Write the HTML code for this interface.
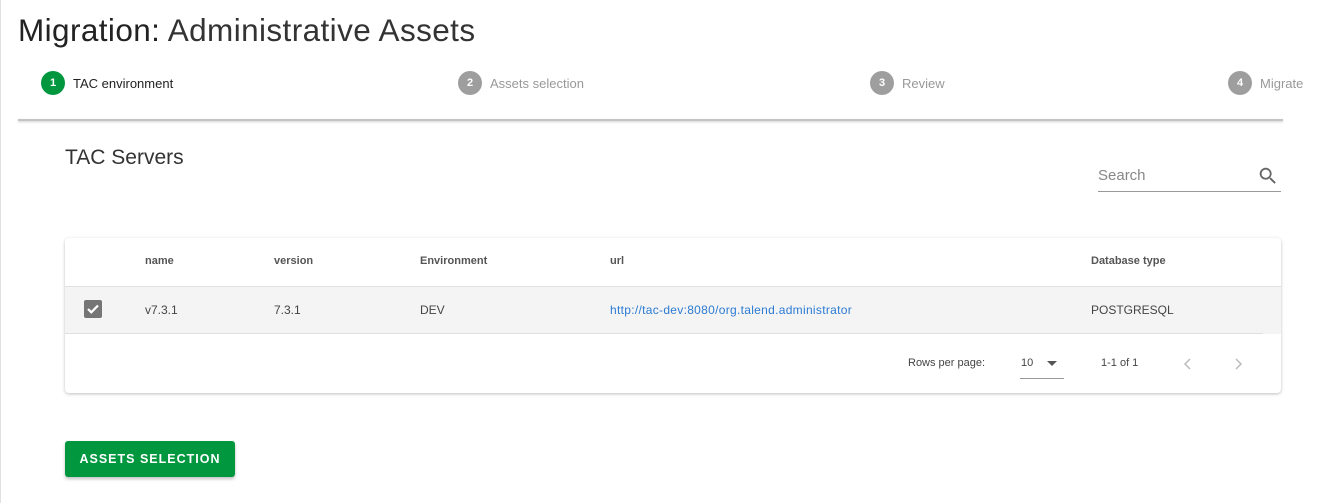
<!DOCTYPE html>
<html><head><style>
*{box-sizing:border-box;margin:0;padding:0}
body{width:1343px;height:503px;background:#fff;font-family:"Liberation Sans",sans-serif;position:relative;overflow:hidden;color:#222}
.abs{position:absolute}
h1{position:absolute;left:18px;top:12px;font-size:31.5px;font-weight:normal;color:#222;letter-spacing:0.4px}
h1 span{color:#333}
.step{position:absolute;top:71px;display:flex;align-items:center;font-size:13px;color:#999}
.step .c{width:24px;height:24px;border-radius:50%;background:#9e9e9e;color:#fff;font-size:11px;font-weight:bold;display:flex;align-items:center;justify-content:center;margin-right:8px}
.step.act{color:#222}.step.act .c{background:#00973e}
.hr{left:18px;top:119px;width:1265px;height:2px;background:#c4c4c4;box-shadow:0 1px 2px rgba(0,0,0,.2)}
.card{left:65px;top:238px;width:1216px;height:155px;background:#fff;border-radius:4px;box-shadow:0 1px 3px rgba(0,0,0,.25)}
.th{position:absolute;top:255px;font-size:11px;font-weight:bold;color:#555}
.td{position:absolute;top:303px;font-size:12px;color:#444}
</style></head><body>
<div class="abs" style="left:0;top:0;width:1px;height:503px;background:#e0e0e0"></div>
<h1>Migration: <span>Administrative Assets</span></h1>
<div class="step act" style="left:41px"><span class="c">1</span>TAC environment</div>
<div class="step" style="left:458px"><span class="c">2</span>Assets selection</div>
<div class="step" style="left:870px"><span class="c">3</span>Review</div>
<div class="step" style="left:1228px"><span class="c">4</span>Migrate</div>
<div class="abs hr"></div>
<div class="abs" style="left:65px;top:146px;font-size:21px;color:#333">TAC Servers</div>
<div class="abs" style="left:1098px;top:167px;font-size:15px;color:#888">Search</div>
<svg class="abs" style="left:1257px;top:165px" width="22" height="22" viewBox="0 0 24 24"><path fill="#666" d="M15.5 14h-.8l-.3-.3A6.5 6.5 0 1 0 9.5 16a6.5 6.5 0 0 0 4.2-1.6l.3.3v.8l5 5 1.5-1.5-5-5zm-6 0a4.5 4.5 0 1 1 0-9 4.5 4.5 0 0 1 0 9z"/></svg>
<div class="abs" style="left:1098px;top:191px;width:183px;height:1px;background:#999"></div>
<div class="abs card"></div>
<div class="abs" style="left:65px;top:286px;width:1216px;height:48px;background:#f4f4f4;border-top:1px solid #e0e0e0"></div>
<div class="abs" style="left:65px;top:333px;width:1198px;height:1px;background:#e0e0e0"></div>
<div class="th" style="left:145px">name</div>
<div class="th" style="left:274px">version</div>
<div class="th" style="left:420px">Environment</div>
<div class="th" style="left:610px">url</div>
<div class="th" style="left:1091px">Database type</div>
<div class="abs" style="left:84px;top:300px;width:18px;height:18px;background:#757575;border-radius:2px"></div>
<svg class="abs" style="left:84px;top:300px" width="18" height="18" viewBox="0 0 18 18"><path d="M4 9l3.3 3.3L14 5.5" stroke="#fff" stroke-width="2.2" fill="none"/></svg>
<div class="td" style="left:145px">v7.3.1</div>
<div class="td" style="left:274px">7.3.1</div>
<div class="td" style="left:420px">DEV</div>
<div class="td" style="left:610px;color:#2b7bd3;letter-spacing:0.3px">http://tac-dev:8080/org.talend.administrator</div>
<div class="td" style="left:1091px">POSTGRESQL</div>
<div class="abs" style="left:908px;top:357px;font-size:11px;color:#444">Rows per page:</div>
<div class="abs" style="left:1021px;top:357px;font-size:11px;color:#444">10</div>
<svg class="abs" style="left:1046px;top:360px" width="12" height="8"><path d="M1 1h10L6 6z" fill="#555"/></svg>
<div class="abs" style="left:1020px;top:378px;width:44px;height:1px;background:#999"></div>
<div class="abs" style="left:1101px;top:357px;font-size:11px;color:#444">1-1 of 1</div>
<svg class="abs" style="left:1180px;top:356px" width="16" height="16"><path d="M10 3L5 8l5 5" stroke="#bbb" stroke-width="1.5" fill="none"/></svg>
<svg class="abs" style="left:1230px;top:356px" width="16" height="16"><path d="M6 3l5 5-5 5" stroke="#bbb" stroke-width="1.5" fill="none"/></svg>
<div class="abs" style="left:65px;top:441px;width:170px;height:36px;background:#00973e;border-radius:3px;box-shadow:0 2px 3px rgba(0,0,0,.25);color:#fff;font-size:12.5px;font-weight:bold;letter-spacing:1px;display:flex;align-items:center;justify-content:center">ASSETS SELECTION</div>
</body></html>
